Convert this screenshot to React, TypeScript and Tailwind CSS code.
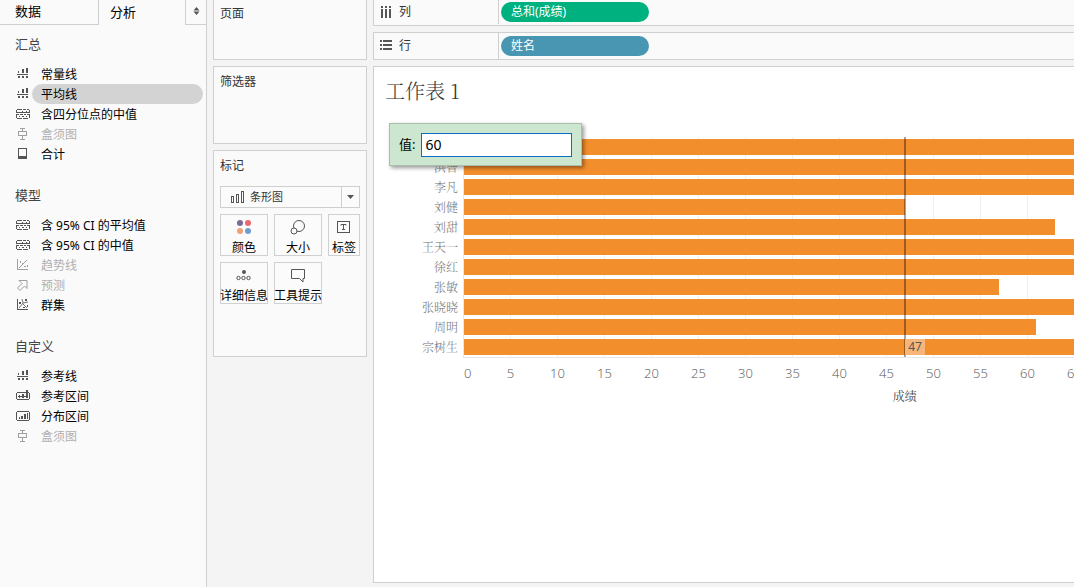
import type { ReactNode } from "react";

const UNIT = 9.4;

function Icon({ children, dim = false }: { children: ReactNode; dim?: boolean }) {
  return (
    <svg
      width="16"
      height="14"
      viewBox="0 0 16 14"
      aria-hidden="true"
      shapeRendering="crispEdges"
      className={dim ? "shrink-0 text-[#a0a0a0]" : "shrink-0 text-[#555555]"}
    >
      {children}
    </svg>
  );
}

const icons: Record<string, ReactNode> = {
  line: (
    <>
      <path d="M3 4h1v2H3zM7 2h2v4H7zM11 1h2v5h-2z" fill="currentColor" />
      <path d="M2 7.500h11" stroke="currentColor" />
      <path d="M3 9h2v2H3zM7 9h2v2H7zM11 9h2v2h-2z" fill="currentColor" />
    </>
  ),
  quartile: (
    <>
      <path d="M2 2.500h5M8 2.500h3M12 2.500h2M1.500 3v2M14.500 3v2" stroke="currentColor" />
      <path d="M1 5.500h14" stroke="currentColor" />
      <path d="M1 7.500h3M5 7.500h3M9 7.500h2M12 7.500h3M1.500 8v3M14.500 8v3" stroke="currentColor" />
      <path d="M2 11.500h12" stroke="currentColor" strokeDasharray="5 1" />
      <path d="M4 9h1v1H4zM7 4h1v1H7zM7 9h2v1H7zM11 4h1v1h-1zM11 9h1v1h-1z" fill="currentColor" />
    </>
  ),
  box: <path d="M5 1.500h5M7.500 1v3M3.500 4.500h8v4h-8zM7.500 9v3M5 12.500h5" fill="none" stroke="currentColor" />,
  total: (
    <>
      <path d="M3.500 1.500h8v10h-8z" fill="none" stroke="currentColor" />
      <path d="M3 9h9v3H3z" fill="currentColor" />
    </>
  ),
  trend: (
    <>
      <path d="M2.500 1v10.500H13" fill="none" stroke="currentColor" />
      <path d="M4 10l8-8" stroke="currentColor" shapeRendering="auto" />
      <path d="M5 3h1v2H5zM7 5h1v1H7zM9 8h2v1H9zM12 7h1v2h-1z" fill="currentColor" />
    </>
  ),
  forecast: (
    <path
      d="M4 2.500h8v8l-2.500-2.500-4.500 4.500-2.500-2.500 4.500-4.500z"
      fill="none"
      stroke="currentColor"
      shapeRendering="auto"
    />
  ),
  cluster: (
    <>
      <path d="M2.500 1v10.500H13" fill="none" stroke="currentColor" />
      <path d="M7 1l1 4 5-1M8 5l-4 5M8 6l4 4" fill="none" stroke="currentColor" strokeWidth="0.8" shapeRendering="auto" />
      <path d="M4 4h2v2H4zM10 1h2v2h-2zM8 9h2v1H8zM12 7h1v2h-1z" fill="currentColor" />
    </>
  ),
  band: (
    <>
      <path d="M2 3.500h12M2 10.500h12M1.500 4v6M14.500 4v6" fill="none" stroke="currentColor" />
      <path d="M4 6h1v3H4zM7 5h2v4H7zM11 1h2v8h-2z" fill="currentColor" />
      <path d="M3 7.500h10" stroke="currentColor" />
    </>
  ),
  distribution: (
    <>
      <path d="M2 2.500h12M2 11.500h12M1.500 3v8M14.500 3v8" fill="none" stroke="currentColor" />
      <path d="M4 8h1v2H4zM6 7h2v3H6zM9 5h2v5H9zM12 4h1v6h-1z" fill="currentColor" />
    </>
  ),
};

type Entry = { label: string; icon: string; disabled?: boolean; active?: boolean };

const sections: { title: string; items: Entry[] }[] = [
  {
    title: "汇总",
    items: [
      { label: "常量线", icon: "line" },
      { label: "平均线", icon: "line", active: true },
      { label: "含四分位点的中值", icon: "quartile" },
      { label: "盒须图", icon: "box", disabled: true },
      { label: "合计", icon: "total" },
    ],
  },
  {
    title: "模型",
    items: [
      { label: "含 95% CI 的平均值", icon: "quartile" },
      { label: "含 95% CI 的中值", icon: "quartile" },
      { label: "趋势线", icon: "trend", disabled: true },
      { label: "预测", icon: "forecast", disabled: true },
      { label: "群集", icon: "cluster" },
    ],
  },
  {
    title: "自定义",
    items: [
      { label: "参考线", icon: "line" },
      { label: "参考区间", icon: "band" },
      { label: "分布区间", icon: "distribution" },
      { label: "盒须图", icon: "box", disabled: true },
    ],
  },
];

function Sidebar() {
  return (
    <aside className="w-[207px] shrink-0 border-r border-[#cfcfcf] bg-[#fafafa]">
      <div role="tablist" className="flex h-[25px] text-[13px] text-black">
        <button role="tab" aria-selected="false" className="w-[99px] border-r border-b border-[#cfcfcf] pl-[15px] text-left">
          数据
        </button>
        <button role="tab" aria-selected="true" className="flex-1 pl-[11px] text-left">
          分析
        </button>
        <button aria-label="切换窗格" className="flex w-[21px] items-center justify-center border-b border-l border-[#cfcfcf]">
          <svg width="7" height="8" viewBox="0 0 7 8" aria-hidden="true" className="mb-[3px]">
            <path d="M3.500 0L6.500 3.500h-6zM3.500 8L6.500 4.500h-6z" fill="#555" />
          </svg>
        </button>
      </div>
      <div className="flex flex-col gap-[21px] pt-[9px]">
        {sections.map((section) => (
          <section key={section.title}>
            <h2 className="mb-[10px] pl-[15px] text-[13px] leading-5 text-[#444444]">{section.title}</h2>
            <ul>
              {section.items.map((item) => (
                <li key={item.label} className="flex h-5 items-center pr-[3px] pl-[15px]">
                  <Icon dim={item.disabled}>{icons[item.icon]}</Icon>
                  <button
                    disabled={item.disabled}
                    className={
                      item.active
                        ? "ml-px h-5 flex-1 rounded-full bg-[#d3d3d3] pt-[2px] pl-[9px] text-left text-xs leading-[18px] text-black"
                        : "ml-px h-5 flex-1 pt-[2px] pl-[9px] text-left text-xs leading-[18px] text-black disabled:text-[#b0b0b0]"
                    }
                  >
                    {item.label}
                  </button>
                </li>
              ))}
            </ul>
          </section>
        ))}
      </div>
    </aside>
  );
}

function MarkButton({ label, narrow = false, children }: { label: string; narrow?: boolean; children: ReactNode }) {
  return (
    <button
      className={
        (narrow ? "w-8" : "w-12") +
        " flex h-[42px] flex-col items-center gap-1 border border-[#d0d0d0] bg-[#fbfbfb] pt-[3px] text-xs leading-4 text-black"
      }
    >
      <svg width="20" height="18" viewBox="0 0 20 18" aria-hidden="true" fill="none" className="shrink-0">
        {children}
      </svg>
      <span className="whitespace-nowrap">{label}</span>
    </button>
  );
}

function Cards() {
  return (
    <div className="flex w-[154px] shrink-0 flex-col gap-[6px] text-xs leading-4 text-[#333333]">
      <section className="h-[60px] border border-t-0 border-[#cfcfcf] bg-[#fafafa] px-[6px] pt-[6px]">
        <h2>页面</h2>
      </section>
      <section className="h-[78px] border border-[#cfcfcf] bg-[#fafafa] px-[6px] pt-[7px]">
        <h2>筛选器</h2>
      </section>
      <section className="h-[207px] border border-[#cfcfcf] bg-[#fafafa] px-[6px] pt-[7px]">
        <h2>标记</h2>
        <div className="mt-3 grid h-[22px] border border-[#cfcfcf] bg-[#fbfbfb]">
          <select
            aria-label="标记类型"
            className="col-start-1 row-start-1 w-full appearance-none pl-[29px] text-[11px] text-[#333333]"
          >
            <option>条形图</option>
          </select>
          <div className="pointer-events-none col-start-1 row-start-1 flex items-center justify-between pl-[9px]">
            <svg width="15" height="13" viewBox="0 0 15 13" fill="none" stroke="#555" aria-hidden="true" shapeRendering="crispEdges">
              <path d="M1.500 5.500h2v6h-2zM6.500 3.500h2v8h-2zM11.500 0.500h2v11h-2z" />
            </svg>
            <span className="flex h-full w-[18px] items-center justify-center border-l border-[#cfcfcf]">
              <svg width="7" height="4" viewBox="0 0 7 4" aria-hidden="true">
                <path d="M0 0h7L3.500 4z" fill="#555" />
              </svg>
            </span>
          </div>
        </div>
        <div className="mt-[6px] flex flex-wrap gap-[6px]">
          <MarkButton label="颜色">
            <circle cx="6" cy="5" r="3" fill="#7b6a95" />
            <circle cx="14" cy="5" r="3" fill="#e9686d" />
            <circle cx="6" cy="13" r="3" fill="#f0a073" />
            <circle cx="14" cy="13" r="3" fill="#6f9bd0" />
          </MarkButton>
          <MarkButton label="大小">
            <circle cx="11" cy="8" r="5.500" stroke="#555" />
            <circle cx="6" cy="13" r="3" fill="#fbfbfb" stroke="#555" />
          </MarkButton>
          <MarkButton label="标签" narrow>
            <path d="M3.500 3.500h12v11h-12z" stroke="#555" shapeRendering="crispEdges" />
            <path d="M7 7.500V6.500h5v1M9.500 6.500v5M8 11.500h3" stroke="#555" />
          </MarkButton>
          <MarkButton label="详细信息">
            <circle cx="10" cy="6" r="2" fill="#555" />
            <circle cx="4.500" cy="12" r="1.700" stroke="#555" />
            <circle cx="9.500" cy="12" r="1.700" stroke="#555" />
            <circle cx="14.500" cy="12" r="1.700" stroke="#555" />
          </MarkButton>
          <MarkButton label="工具提示">
            <path d="M3.500 3.500h13v9h-1.500v3.500l-3.500-3.500h-8z" stroke="#555" />
          </MarkButton>
        </div>
      </section>
    </div>
  );
}

const rows = [
  { name: "", value: 86 },
  { name: "洪智", value: 78 },
  { name: "李凡", value: 88 },
  { name: "刘健", value: 47 },
  { name: "刘甜", value: 63 },
  { name: "王天一", value: 80 },
  { name: "徐红", value: 85 },
  { name: "张敏", value: 57 },
  { name: "张晓晓", value: 90 },
  { name: "周明", value: 61 },
  { name: "宗树生", value: 75 },
];

const ticks = [5, 10, 15, 20, 25, 30, 35, 40, 45, 50, 55, 60, 65];

function Chart() {
  return (
    <div className="flex">
      <div className="w-[89px] shrink-0 pr-[5px] text-right font-['Noto_Serif_CJK_SC','Liberation_Serif','Noto_Sans_CJK_SC',serif] text-xs leading-5 font-light text-[#777777]">
        {rows.map((row, i) => (
          <div key={i} className="h-5">
            {row.name}
          </div>
        ))}
      </div>
      <div className="min-w-0 flex-1 overflow-hidden">
        <div className="relative border-b border-l border-[#e8e8e8]">
          {ticks.map((t) => (
            <div key={t} className="absolute inset-y-0 w-px bg-[#f0f0f0]" style={{ left: Math.round(t * UNIT) - 1 }} />
          ))}
          {rows.map((row, i) => (
            <div key={i} className="flex h-5 items-center">
              <div className="relative h-4 shrink-0 bg-[#f28e2b]" style={{ width: Math.round(row.value * UNIT) - 1 }} />
            </div>
          ))}
          <div className="absolute inset-y-0 w-[2px] bg-black/35" style={{ left: Math.round(47 * UNIT) - 2 }} />
          <div
            className="absolute bottom-[2px] h-4 w-5 bg-[#f7b679] text-center text-xs leading-4 text-[#555555]"
            style={{ left: Math.round(47 * UNIT) - 1 }}
          >
            47
          </div>
        </div>
        <div className="mt-[7px] flex font-['Open_Sans',sans-serif] text-[13px] leading-4 font-light text-[#555555]">
          <span className="w-6 shrink-0 pl-px">0</span>
          {ticks.map((t) => (
            <span key={t} className="w-[47px] shrink-0 text-center">
              {t}
            </span>
          ))}
        </div>
        <div
          className="mt-[7px] text-center font-['Noto_Serif_CJK_SC','Liberation_Serif','Noto_Sans_CJK_SC',serif] text-xs leading-4 text-[#444444]"
          style={{ width: 94 * UNIT }}
        >
          成绩
        </div>
      </div>
    </div>
  );
}

function Shelf({ label, field, tone, first = false }: { label: string; field: string; tone: string; first?: boolean }) {
  return (
    <div
      className={
        (first ? "h-[26px] pb-px" : "h-7 border-t") +
        " flex items-center border-b border-l border-[#cfcfcf] bg-[#fafafa] text-xs text-[#333333]"
      }
    >
      <div className="flex h-full w-[125px] items-center gap-[7px] border-r border-[#cfcfcf] pl-[6px]">
        <svg width="12" height="12" viewBox="0 0 12 12" fill="#555" aria-hidden="true" shapeRendering="crispEdges">
          {first ? (
            <path d="M1 0h2v2H1zM5 0h2v2H5zM9 0h2v2H9zM1 3h2v9H1zM5 3h2v9H5zM9 3h2v9H9z" />
          ) : (
            <path d="M0 0h2v2H0zM0 4h2v2H0zM0 8h2v2H0zM3 0h9v2H3zM3 4h9v2H3zM3 8h9v2H3z" />
          )}
        </svg>
        <span>{label}</span>
      </div>
      <button className={tone + " ml-[2px] h-5 w-[148px] rounded-full pl-[10px] text-left text-xs leading-5 text-white"}>
        {field}
      </button>
    </div>
  );
}

export default function App() {
  return (
    <div className="flex h-screen gap-[6px] overflow-hidden bg-[#f4f4f4] font-['Noto_Sans','Noto_Sans_CJK_SC',sans-serif]">
      <Sidebar />
      <Cards />
      <main className="flex min-w-0 flex-1 flex-col gap-[6px] pb-1">
        <Shelf first label="列" field="总和(成绩)" tone="bg-[#00b180]" />
        <Shelf label="行" field="姓名" tone="bg-[#4996b2]" />
        <div className="relative min-h-0 flex-1 border border-r-0 border-[#cfcfcf] bg-white">
          <h1 className="mt-2 mb-[30px] pl-[11px] font-['Noto_Serif_CJK_SC','Liberation_Serif','Noto_Sans_CJK_SC',serif] text-xl leading-8 font-light text-[#333333]">
            工作表 1
          </h1>
          <Chart />
          <div className="absolute top-[56px] left-[15px] flex h-[43px] w-[193px] items-center gap-[6px] border border-[#a9bfab] bg-[#cce6cf] px-[9px] shadow-[2px_2px_4px_rgba(0,0,0,0.4)]">
            <label htmlFor="value" className="shrink-0 text-[13px] text-black">
              值:
            </label>
            <input
              id="value"
              defaultValue="60"
              className="h-6 min-w-0 flex-1 border border-[#0a6fc2] bg-white px-[3px] text-sm text-black outline-none"
            />
          </div>
        </div>
      </main>
    </div>
  );
}
